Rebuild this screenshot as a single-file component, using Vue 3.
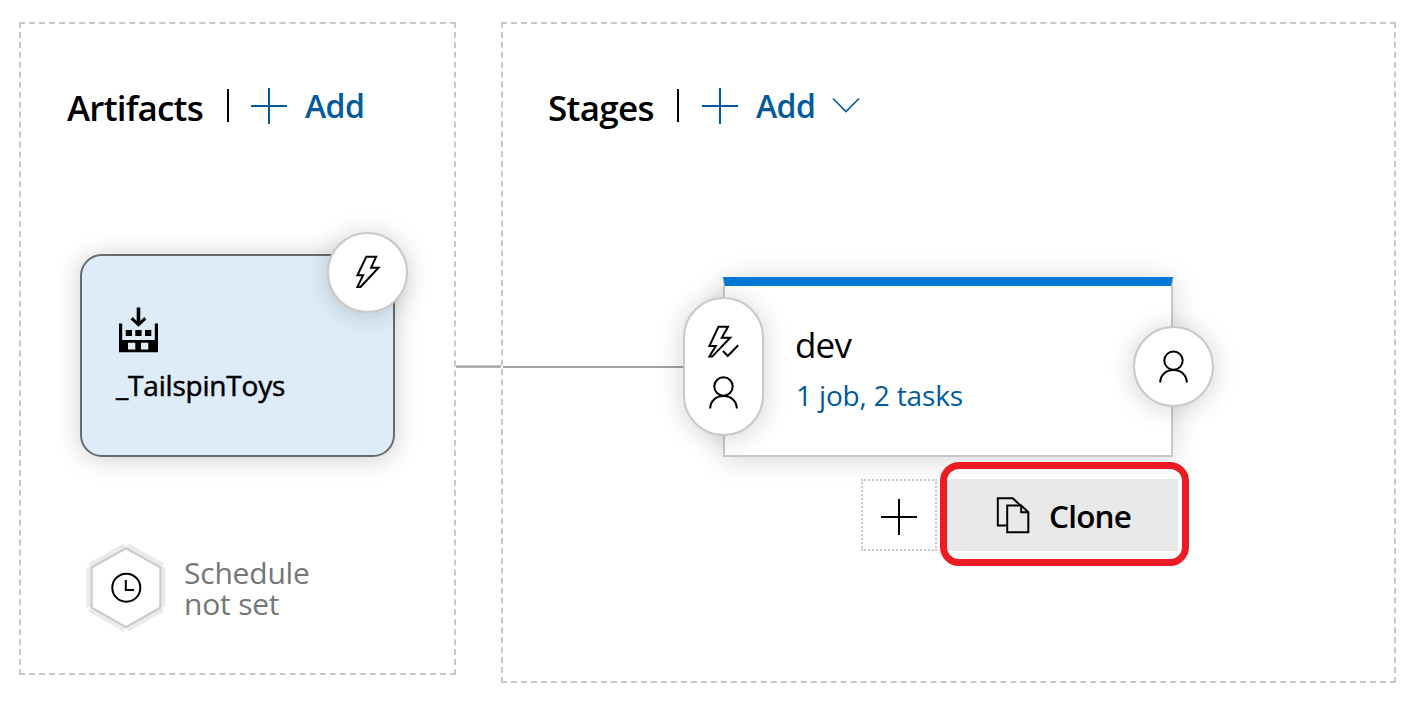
<script setup>
const bolt = '37.3,22.8 47.1,22.8 42.1,33.8 49.5,33.8 31.5,53 28.4,53 34.1,41.3 28.4,41.3'
</script>

<template>
  <main class="pipeline">
    <section class="panel artifacts">
      <header class="head">
        <h2 class="title t-art">Artifacts</h2>
        <i class="sep"></i>
        <svg class="plus" viewBox="0 0 36 36"><path d="M0 18H36M18 0V36" /></svg>
        <span class="add">Add</span>
      </header>

      <div class="artifact">
        <svg class="build" viewBox="0 0 42 48">
          <path d="M18.7 1.6h3.6v13.4l4-4 2 2.4-7.8 7.4-7.8-7.4 2-2.4 4 4z" />
          <path fill-rule="evenodd" d="M1 17.5h3.2V34H36.8V17.5H40V46.3H1zM10 36.7v6.8h7.3v-6.8zM23 36.7v6.8h7.3v-6.8z" />
          <path d="M7.7 24h6.3v6H7.7zM17.3 24h6.3v6h-6.3zM27 24h6.3v6H27z" />
        </svg>
        <div class="name">_TailspinToys</div>
        <div class="round trigger">
          <svg class="glyph" viewBox="0 0 77 77"><polygon :points="bolt" /></svg>
        </div>
      </div>

      <div class="schedule">
        <svg class="hex" viewBox="0 0 80 90">
          <g class="halo">
            <path d="M3 24.3V64.3M77 24.3V64.3M3.3 22.7L39 2.6M41 2.6L76.7 22.7M3.3 66.3L39 86.6M41 86.6L76.7 66.3" />
          </g>
          <polygon class="edge" points="40,5.3 74.3,24.3 74.3,64.7 40,84 5.7,64.7 5.7,24.3" />
          <circle class="ink" cx="40.3" cy="44.7" r="14" />
          <path class="ink" d="M39.8 37V47H48" />
        </svg>
        <div class="unset">Schedule<br />not set</div>
      </div>
    </section>

    <div class="link"></div>

    <section class="panel stages">
      <header class="head">
        <h2 class="title t-stg">Stages</h2>
        <i class="sep"></i>
        <svg class="plus" viewBox="0 0 36 36"><path d="M0 18H36M18 0V36" /></svg>
        <span class="add">Add</span>
        <svg class="chev" viewBox="0 0 28 16"><path d="M1 1.5L14 14.5L27 1.5" /></svg>
      </header>

      <div class="row">
        <div class="wire"></div>
        <div class="stage">
          <div class="dev">dev</div>
          <div class="jobs">1 job, 2 tasks</div>
          <div class="pill">
            <svg class="glyph" viewBox="0 0 77 135">
              <polygon points="33.5,27.8 43,27.8 36.8,38.8 45.2,38.8 27.2,57.6 24.4,57.6 30.8,47 24.4,47" />
              <path d="M38 52L42.7 57L53.2 46.3" />
              <circle cx="38.5" cy="87.5" r="9.2" />
              <path d="M25.2 109.6C25.2 101.9 31 97 38.5 97S51.8 101.9 51.8 109.6" />
            </svg>
          </div>
          <div class="round approver">
            <svg class="glyph" viewBox="0 0 77 77">
              <circle cx="38.5" cy="32.6" r="9.2" />
              <path d="M25.2 54.6C25.2 46.9 31 42 38.5 42S51.8 46.9 51.8 54.6" />
            </svg>
          </div>
        </div>
      </div>

      <div class="actions">
        <div class="new"><svg class="plus" viewBox="0 0 36 36"><path d="M0 18H36M18 0V36" /></svg></div>
        <div class="clone">
          <svg class="pages" viewBox="0 0 34 38">
            <path d="M10 29.5H1.8V2.2H16.7L24.5 9.4" />
            <path d="M11.2 9.4H25.2L32.3 16.2V36.2H11.2ZM25.2 9.4V16.2H32.3" />
          </svg>
          <span class="clabel">Clone</span>
          <div class="mark"></div>
        </div>
      </div>
    </section>
  </main>
</template>

<style>
body { background: #fff; }
</style>

<style scoped>
.pipeline {
  display: flex;
  align-items: flex-start;
  width: 1415px;
  height: 702px;
  padding: 22px 19px 0;
  box-sizing: border-box;
  overflow: hidden;
  background: #fff;
  color: #000;
  font-family: "Open Sans", "Noto Sans", sans-serif;
}
.panel { box-sizing: border-box; border: 2px dashed #c8c8c8; }
.artifacts { width: 437px; height: 653px; }
.stages { width: 895px; height: 661px; }
.link {
  width: 45px;
  height: 3px;
  margin-top: 343px;
  background: linear-gradient(#c8c8c8 0 1px, #a0a0a0 1px 2px, #b4b4b4 2px);
}
.head { display: flex; align-items: flex-start; height: 40px; padding: 62px 0 0 46px; white-space: nowrap; }
.stages .head { padding-left: 45px; }
.title { margin: 0; width: 160px; font-size: 35px; font-weight: 600; line-height: 43px; }
.t-art { letter-spacing: -0.8px; }
.t-stg { width: 129px; letter-spacing: -0.7px; }
.sep { width: 2px; height: 33px; margin: 3px 22px 0 0; background: #000; }
.plus { width: 36px; height: 36px; margin-top: 2px; fill: none; stroke: #005a9e; stroke-width: 2; }
.stages .head .plus { margin-left: 1px; }
.add { width: 60px; margin-left: 18px; font-size: 32px; font-weight: 600; line-height: 40px; color: #005a9e; letter-spacing: -0.6px; }
.chev { width: 28px; height: 16px; margin: 11px 0 0 16px; fill: none; stroke: #005a9e; stroke-width: 1.6; }

.artifact {
  position: relative;
  box-sizing: border-box;
  width: 315px;
  height: 203px;
  margin: 128px 0 0 59px;
  padding: 50px 0 0 34px;
  border: 2px solid #666b70;
  border-radius: 22px;
  background: #deecf9;
  box-shadow: 0 2px 26px rgba(0, 0, 0, 0.2);
}
.build { display: block; width: 42px; height: 48px; margin-left: 2px; }
.name { margin-top: 13px; font-size: 28px; line-height: 36px; letter-spacing: -0.2px; white-space: nowrap; -webkit-text-stroke: 0.5px #000; }
.round {
  position: absolute;
  box-sizing: border-box;
  width: 81px;
  height: 81px;
  border: 2px solid #c8c8c8;
  border-radius: 50%;
  background: #fff;
  box-shadow: 0 2px 26px rgba(0, 0, 0, 0.18);
}
.trigger { left: 245px; top: -24px; }
.approver { left: 408px; top: 40px; }
.glyph { display: block; width: 100%; height: 100%; fill: none; stroke: #000; stroke-width: 2; }
.schedule { display: flex; margin: 86px 0 0 65px; }
.hex { width: 80px; height: 90px; }
.halo { fill: none; stroke: #eaeaea; stroke-width: 5; }
.edge { fill: #fff; stroke: #c8c8c8; stroke-width: 2; }
.ink { fill: none; stroke: #000; stroke-width: 2; }
.unset { margin: 14px 0 0 18px; font-size: 30px; line-height: 31px; letter-spacing: -0.2px; color: #767676; white-space: nowrap; }

.row { display: flex; margin-top: 151px; }
.wire { width: 220px; height: 2px; margin-top: 89px; background: #a0a0a0; }
.stage {
  position: relative;
  box-sizing: border-box;
  width: 450px;
  height: 180px;
  padding: 35px 0 0 71px;
  border: 2px solid #c8c8c8;
  border-top: 9px solid #0078d7;
  background: #fff;
  box-shadow: 0 3px 26px rgba(0, 0, 0, 0.17);
}
.dev { margin-left: -1px; font-size: 35px; line-height: 48px; letter-spacing: -0.8px; }
.jobs { margin-top: 6px; font-size: 28px; line-height: 40px; letter-spacing: -0.15px; color: #005a9e; white-space: nowrap; }
.pill {
  position: absolute;
  left: -42px;
  top: 11px;
  box-sizing: border-box;
  width: 81px;
  height: 139px;
  border: 2px solid #c8c8c8;
  border-radius: 41px;
  background: #fff;
  box-shadow: 0 2px 26px rgba(0, 0, 0, 0.18);
}
.actions { position: relative; display: flex; margin: 22px 0 0 358px; }
.new {
  box-sizing: border-box;
  width: 76px;
  height: 72px;
  padding: 16px 0 0 18px;
  border: 2px dotted #c8c8c8;
  background: #fff;
}
.new .plus { stroke: #000; }
.clone {
  position: relative;
  display: flex;
  box-sizing: border-box;
  width: 235px;
  height: 72px;
  margin-left: 6px;
  padding: 17px 0 0 53px;
  background: #e9e9e9;
}
.pages { width: 34px; height: 38px; fill: none; stroke: #000; stroke-width: 2; }
.clabel { margin-left: 19px; font-size: 31.5px; font-weight: 600; line-height: 39px; letter-spacing: -0.8px; }
.mark {
  position: absolute;
  left: -3px;
  top: -17px;
  box-sizing: border-box;
  width: 249px;
  height: 104px;
  border: 7px solid #ed1c24;
  border-radius: 19px;
}
</style>
